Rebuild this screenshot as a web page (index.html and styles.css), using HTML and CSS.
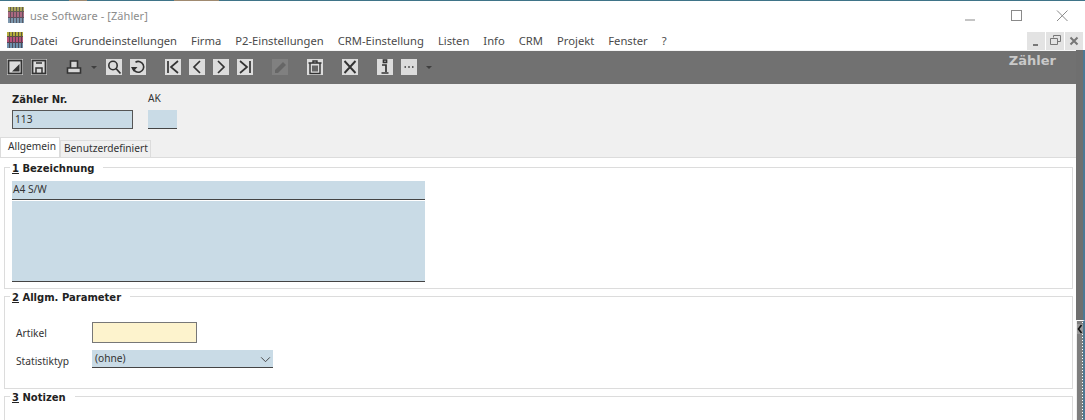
FILE: index.html
```html
<!DOCTYPE html>
<html lang="de">
<head>
<meta charset="utf-8">
<title>use Software - [Zähler]</title>
<link rel="stylesheet" href="styles.css">
</head>
<body>
<div class="window">
  <div class="titlebar">
    <svg class="appicon" viewBox="0 0 16 16"><rect width="16" height="5" fill="#a9a45a"/><rect y="5" width="16" height="6" fill="#a9687f"/><rect y="11" width="16" height="5" fill="#7d97ad"/><path d="M2.5 0V16M5.5 0V16M8.5 0V16M11.5 0V16M14.5 0V16M0 4.5H16M0 10.5H16" stroke="#4b4650" stroke-width="1" opacity=".75"/></svg>
    <span class="title">use Software - [Zähler]</span>
    <div class="winctl">
      <svg class="wc" viewBox="0 0 46 20"><path d="M18 15H28" stroke="#8a8a8a"/></svg>
      <svg class="wc" viewBox="0 0 46 20"><rect x="18.5" y="5.5" width="10" height="10" fill="none" stroke="#8a8a8a"/></svg>
      <svg class="wc" viewBox="0 0 46 20"><path d="M18 5.5L28.5 16M28.5 5.5L18 16" stroke="#8a8a8a" fill="none"/></svg>
    </div>
  </div>
  <div class="menubar">
    <svg class="appicon" viewBox="0 0 16 16"><rect width="16" height="5" fill="#b5ad3c"/><rect y="5" width="16" height="6" fill="#b8527a"/><rect y="11" width="16" height="5" fill="#6f90ad"/><path d="M2.5 0V16M5.5 0V16M8.5 0V16M11.5 0V16M14.5 0V16M0 4.5H16M0 10.5H16" stroke="#3f3a44" stroke-width="1" opacity=".75"/></svg>
    <nav class="menu">
      <span>Datei</span><span>Grundeinstellungen</span><span>Firma</span><span>P2-Einstellungen</span><span>CRM-Einstellung</span><span>Listen</span><span>Info</span><span>CRM</span><span>Projekt</span><span>Fenster</span><span>?</span>
    </nav>
    <div class="mdi">
      <span class="mdibtn"><svg viewBox="0 0 18 18"><path d="M6 13H11" stroke="#777" stroke-width="2"/></svg></span>
      <span class="mdibtn"><svg viewBox="0 0 18 18"><path d="M7.5 5.5V3.5H14.5V9.5H12M4.5 6.5H11.5V12.5H4.5Z" fill="none" stroke="#777"/></svg></span>
      <span class="mdibtn"><svg viewBox="0 0 18 18"><path d="M5.5 5.5L12.5 12.5M12.5 5.5L5.5 12.5" stroke="#777" stroke-width="2"/></svg></span>
    </div>
  </div>
  <div class="main">
    <div class="workspace">
      <div class="toolbar">
        <div class="tools">
          <span class="tool"><svg viewBox="0 0 16 16"><rect x="1.5" y="1.5" width="13" height="13" fill="none" stroke="#333" stroke-width="1.8"/><path d="M5 12.5L12.5 5V12.5Z" fill="#333"/></svg></span>
          <span class="tool"><svg viewBox="0 0 16 16"><rect x="1.5" y="1.5" width="13" height="13" fill="none" stroke="#333" stroke-width="1.8"/><path d="M5 14V9H11V14M5 4H11" fill="none" stroke="#333" stroke-width="1.5"/></svg></span>
        </div>
        <div class="tools wide">
          <span class="tool plain"><svg viewBox="0 0 16 16"><path d="M4.5 9V2H11.5V9ZM1.5 9H14.5V14H1.5Z" fill="#d6d6d6" stroke="#333" stroke-width="1.6"/></svg></span>
          <span class="drop"></span>
        </div>
        <div class="tools search">
          <span class="tool"><svg viewBox="0 0 16 16"><circle cx="7" cy="6.5" r="4.2" fill="none" stroke="#333" stroke-width="1.6"/><path d="M10 9.5L14.5 14.5" stroke="#333" stroke-width="1.8"/></svg></span>
          <span class="tool"><svg viewBox="0 0 16 16"><path d="M5.5 3.2A5.4 5.4 0 1 1 3 9" fill="none" stroke="#333" stroke-width="1.6"/><path d="M1 8H7.5L3.5 12.5Z" fill="#333"/></svg></span>
        </div>
        <div class="tools wide">
          <span class="tool"><svg viewBox="0 0 16 16"><path d="M3 2V14M13 2L6 8L13 14" fill="none" stroke="#333" stroke-width="1.7"/></svg></span>
          <span class="tool"><svg viewBox="0 0 16 16"><path d="M11 2L5 8L11 14" fill="none" stroke="#333" stroke-width="1.7"/></svg></span>
          <span class="tool"><svg viewBox="0 0 16 16"><path d="M5 2L11 8L5 14" fill="none" stroke="#333" stroke-width="1.7"/></svg></span>
          <span class="tool"><svg viewBox="0 0 16 16"><path d="M3 2L10 8L3 14M13 2V14" fill="none" stroke="#333" stroke-width="1.7"/></svg></span>
        </div>
        <div class="tools wide">
          <span class="tool off"><svg viewBox="0 0 16 16"><path d="M3 11L11 3L14 6L6 14H3Z" fill="#666"/></svg></span>
        </div>
        <div class="tools wide">
          <span class="tool"><svg viewBox="0 0 16 16"><path d="M1.5 4H14.5M6 4V2H10V4M3 4V14.5H13V4M6 6.5V12.5M8 6.5V12.5M10 6.5V12.5" fill="none" stroke="#333" stroke-width="1.4"/></svg></span>
        </div>
        <div class="tools wide">
          <span class="tool"><svg viewBox="0 0 16 16"><path d="M2.5 2L13.5 14M13.5 2L2.5 14" stroke="#333" stroke-width="1.9"/></svg></span>
        </div>
        <div class="tools wide">
          <span class="tool"><svg viewBox="0 0 16 16"><path d="M6.5 1V3.5H9.5V1ZM5 6H9V13M4.5 14H11.5" fill="none" stroke="#333" stroke-width="1.7"/></svg></span>
          <span class="tool"><svg viewBox="0 0 16 16"><path d="M3.5 8H5M7.2 8H8.8M11 8H12.5" stroke="#333" stroke-width="1.6"/></svg></span>
          <span class="drop"></span>
        </div>
        <span class="heading">Zähler</span>
      </div>
      <div class="form">
        <div class="head-fields">
          <div class="hf">
            <label class="strong">Zähler Nr.</label>
            <div class="input boxed nr">113</div>
          </div>
          <div class="hf">
            <label class="ak">AK</label>
            <div class="input lined akf"></div>
          </div>
        </div>
        <div class="tabs">
          <span class="tab active">Allgemein</span>
          <span class="tab">Benutzerdefiniert</span>
        </div>
        <div class="panel">
          <fieldset class="group g1">
            <legend><u>1</u> Bezeichnung</legend>
            <div class="input lined memo-a">A4 S/W</div>
            <div class="input lined memo-b"></div>
          </fieldset>
          <fieldset class="group g2">
            <legend><u>2</u> Allgm. Parameter</legend>
            <div class="params">
              <label class="plabel">Artikel</label>
              <div class="input artikel"></div>
              <label class="plabel stat">Statistiktyp</label>
              <div class="input lined select">(ohne)
                <svg viewBox="0 0 12 8"><path d="M1 1.5L6 6.5L11 1.5" fill="none" stroke="#444" stroke-width="1.1"/></svg>
              </div>
            </div>
          </fieldset>
          <fieldset class="group g3">
            <legend><u>3</u> Notizen</legend>
          </fieldset>
        </div>
      </div>
    </div>
    <div class="side">
      <div class="side-top"></div>
      <div class="splitter">
        <svg viewBox="0 0 6 10"><path d="M4.5 1L1.5 5L4.5 9" fill="none" stroke="#111" stroke-width="1.6"/></svg>
      </div>
    </div>
  </div>
</div>
</body>
</html>
```
FILE: styles.css
```css
* { box-sizing: border-box; }
html, body { margin: 0; padding: 0; height: 100%; overflow: hidden; }
body { font-family: "Noto Sans", sans-serif; font-size: 10.2px; color: #333; background: #fff; }
.window { width: 1085px; height: 420px; display: flex; flex-direction: column; overflow: hidden; }

.titlebar { height: 29px; flex: none; display: flex; align-items: center; padding-left: 8px; background: #fff;
  border-top: 1px solid #3f7488; border-image: linear-gradient(90deg, #3f7488 70px, #a08a70 70px, #a08a70 88px, #3f7488 88px, #3f7488 175px, #a08a70 175px, #a08a70 220px, #3f7488 220px) 1; }
.appicon { width: 16px; height: 16px; flex: none; }
.title { margin-left: 6px; font-size: 11px; letter-spacing: .07px; color: #8c8c8c; }
.winctl { margin-left: auto; display: flex; }
.wc { width: 46px; height: 20px; display: block; }

.menubar { height: 21px; flex: none; display: flex; align-items: center; padding-left: 7px; background: #fff; }
.menu { display: flex; gap: 14px; margin-left: 7px; padding-top: 2px; font-size: 11.23px; color: #4a4a4a; }
.mdi { margin-left: auto; display: flex; gap: 1px; padding-right: 2px; align-self: flex-start; padding-top: 3px; }
.mdibtn { width: 18px; height: 18px; background: #e3e3e3; display: block; }
.mdibtn svg { display: block; width: 18px; height: 18px; }

.main { flex: 1; display: flex; min-height: 0; }
.workspace { flex: 1; min-width: 0; display: flex; flex-direction: column; }

.toolbar { height: 34px; flex: none; display: flex; align-items: flex-start; padding: 8px 20px 0 7px; background: #717171; border-top: 1px solid #f4f4f4; }
.tools { display: flex; gap: 8px; align-items: center; }
.tools.wide { margin-left: 19px; }
.tools.search { margin-left: 9px; }
.tool { width: 16px; height: 16px; background: #dcdcdc; display: block; }
.tool.plain { background: transparent; }
.tool.off { background: #808080; }
.tool svg { display: block; width: 16px; height: 16px; }
.drop { width: 0; height: 0; margin-left: 1px; border: 3px solid transparent; border-top: 3px solid #3f3f3f; border-bottom: 0; }
.heading { margin-left: auto; margin-top: -6px; font-family: "DejaVu Sans", sans-serif; font-weight: 700; font-size: 13px; color: #c9c9c9; }

.form { flex: 1; min-height: 0; background: #f0f0f0; display: flex; flex-direction: column; }
.head-fields { display: flex; gap: 15px; padding: 8px 0 0 12px; height: 53px; flex: none; }
.hf { display: flex; flex-direction: column; }
.strong { font-family: "DejaVu Sans", sans-serif; font-weight: 700; font-size: 10px; color: #222; height: 18px; line-height: 15px; }
.ak { height: 18px; line-height: 13px; }
.input { background: #c9dbe6; line-height: 17px; padding-left: 1px; }
.boxed { border: 1px solid #555; }
.lined { border-bottom: 1px solid #444; }
.nr { width: 121px; height: 19px; padding-left: 2px; }
.akf { width: 29px; height: 19px; }

.tabs { height: 20px; flex: none; display: flex; align-items: flex-end; }
.tab { height: 17px; line-height: 15px; padding: 0 3px; width: 91px; background: #f0f0f0; border: 1px solid #dcdcdc; border-bottom: 0; white-space: nowrap; }
.tab.active { width: 60px; height: 20px; line-height: 17px; padding-left: 7px; background: #fff; border-bottom: 0; }

.panel { flex: 1; min-height: 0; background: #fff; padding: 1px 3px 0 4px; border-top: 1px solid #dcdcdc; }
.group { margin: 0; padding: 0 7px; border: 1px solid #dcdcdc; min-width: 0; }
.group + .group { margin-top: -1px; }
.group legend { font-family: "DejaVu Sans", sans-serif; font-weight: 700; font-size: 10px; line-height: 14px; color: #222; padding: 3px 9px 0 2px; margin-left: -2px; }
.g1 { height: 130px; }
.g2 { height: 101px; }
.g3 { height: 60px; }
.memo-a { width: 413px; height: 19px; margin-top: 5px; }
.memo-b { width: 413px; height: 81px; margin-top: 1px; }
.params { display: grid; grid-template-columns: 76px 181px; grid-template-rows: 21px 18px; row-gap: 7px; margin: 17px 0 0 4px; align-items: center; }
.plabel { line-height: 14px; }
.stat { padding-top: 4px; }
.artikel { width: 105px; height: 21px; background: #fdf3cd; border: 1px solid #777; }
.select { height: 18px; padding-left: 3px; position: relative; line-height: 17px; }
.select svg { position: absolute; right: 2px; top: 6px; width: 11px; height: 7px; }

.side { width: 9px; flex: none; display: flex; flex-direction: column; background: #6f6f6f; }
.side-top { flex: 1; background: #6f6f6f; border-right: 2px solid #4d7894; }
.splitter { height: 100px; flex: none; background: radial-gradient(circle, #fff 0.8px, transparent 1px) 1px 0 / 9px 3px, #7d7d7d; border-left: 1px solid #eee; border-top: 1px solid #fff; border-right: 2px solid #4d7894; }
.splitter svg { display: block; width: 6px; height: 10px; margin-top: 3px; background: #999; }
```
